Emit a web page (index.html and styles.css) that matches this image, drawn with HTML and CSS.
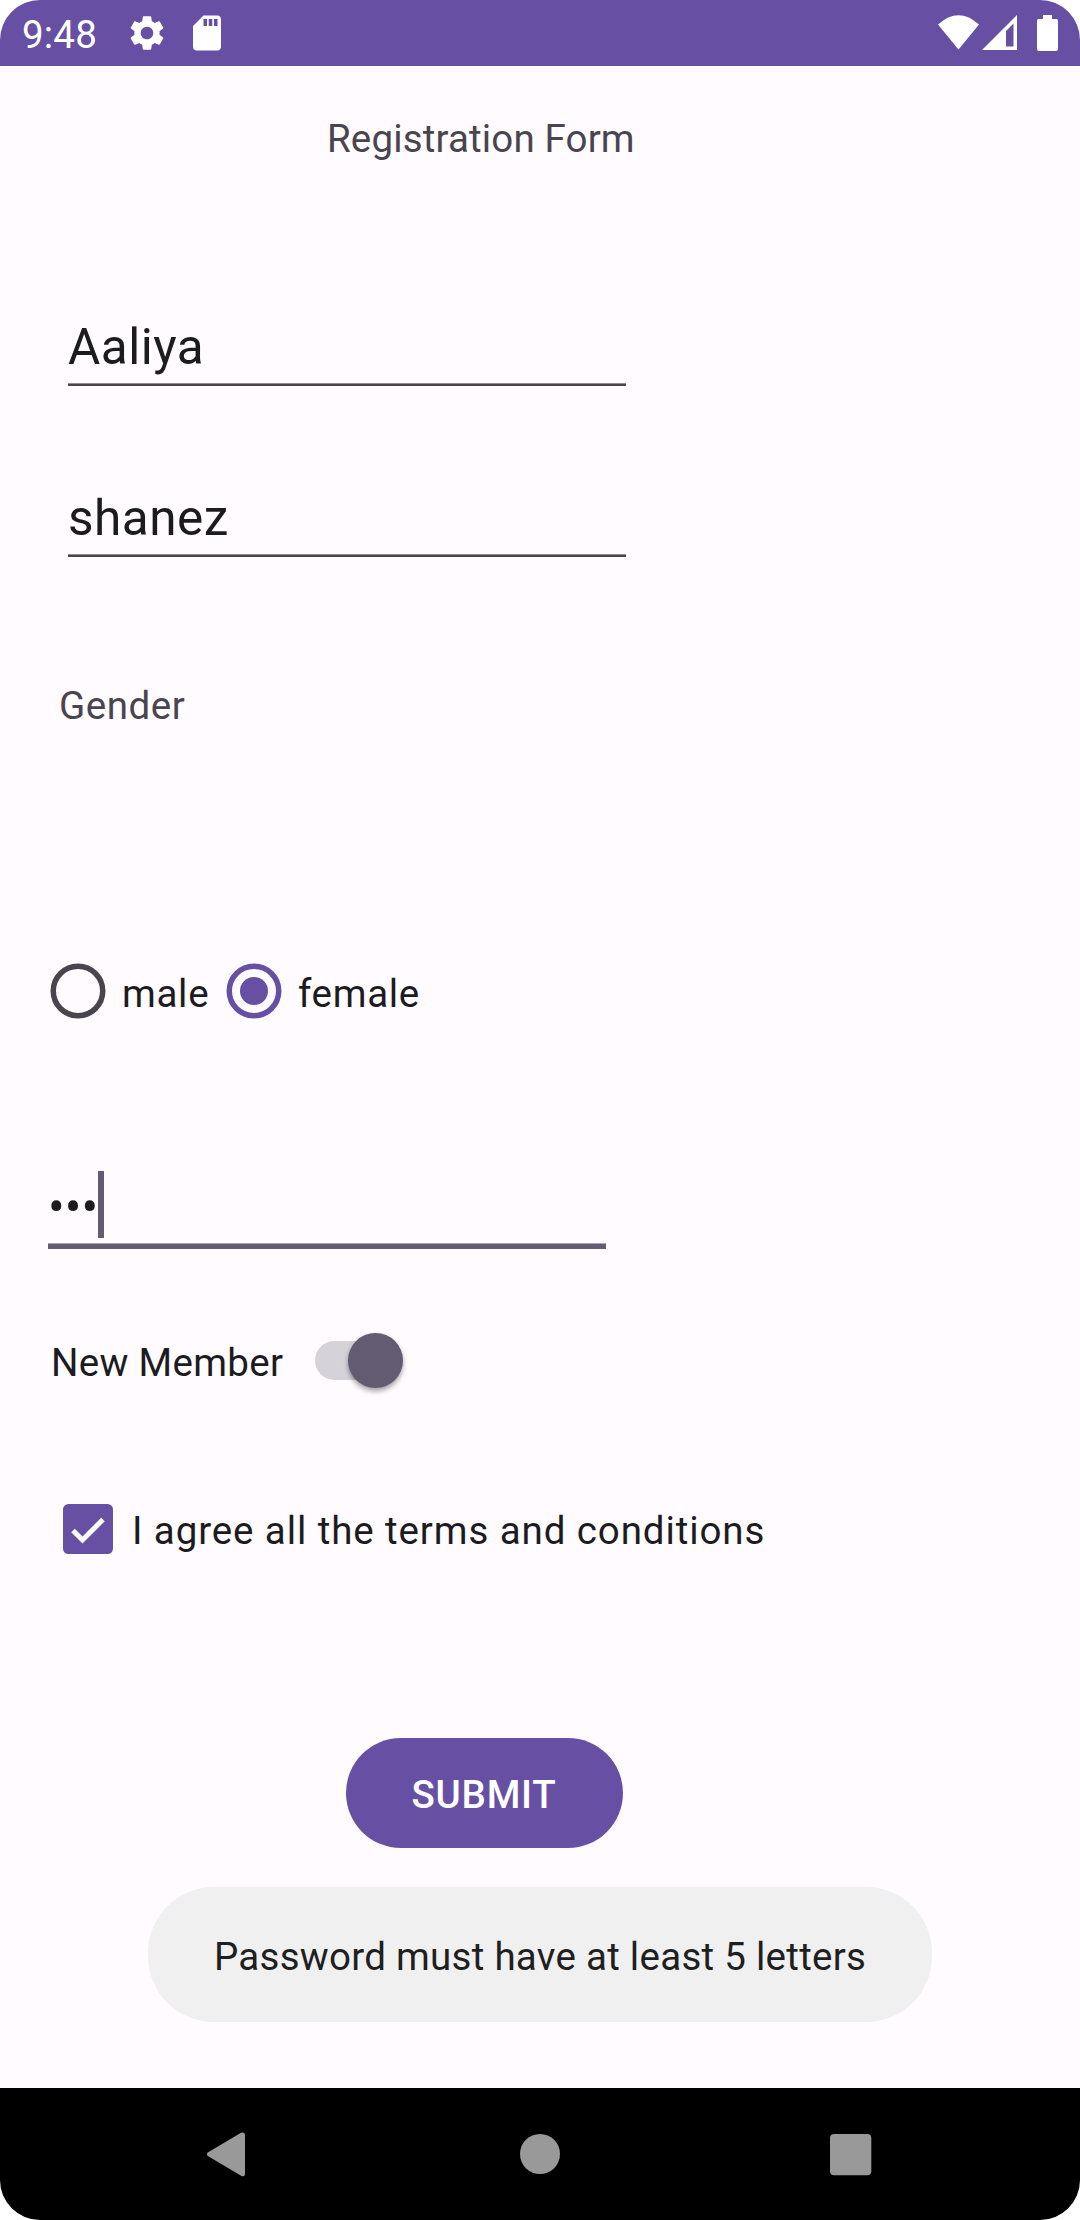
FILE: index.html
```html
<!DOCTYPE html>
<html lang="en">
<head>
<meta charset="utf-8">
<title>Registration Form</title>
<link rel="stylesheet" href="styles.css">
</head>
<body>
<div class="screen">
  <header class="status">
    <span class="clock">9:48</span>
    <svg class="gear" width="42" height="42" viewBox="0 0 24 24" fill="#fff"><path d="M19.14 12.94c.04-.3.06-.61.06-.94 0-.32-.02-.64-.07-.94l2.03-1.58c.18-.14.23-.41.12-.61l-1.92-3.32c-.12-.22-.37-.29-.59-.22l-2.39.96c-.5-.38-1.03-.7-1.62-.94L14.4 2.81c-.04-.24-.24-.41-.48-.41h-3.84c-.24 0-.43.17-.47.41l-.36 2.54c-.59.24-1.13.57-1.62.94l-2.39-.96c-.22-.08-.47 0-.59.22L2.74 8.87c-.12.21-.08.47.12.61l2.03 1.58c-.05.3-.09.63-.09.94s.02.64.07.94l-2.03 1.58c-.18.14-.23.41-.12.61l1.92 3.32c.12.22.37.29.59.22l2.39-.96c.5.38 1.03.7 1.62.94l.36 2.54c.05.24.24.41.48.41h3.84c.24 0 .44-.17.47-.41l.36-2.54c.59-.24 1.13-.56 1.62-.94l2.39.96c.22.08.47 0 .59-.22l1.92-3.32c.12-.22.07-.47-.12-.61l-2.01-1.58zM12 15.6c-1.98 0-3.6-1.62-3.6-3.6s1.62-3.6 3.6-3.6 3.6 1.62 3.6 3.6-1.62 3.6-3.6 3.6z"/></svg>
    <svg class="card" width="42" height="42" viewBox="0 0 24 24" fill="#fff"><path d="M18 2h-8L4 8v12c0 1.100.9 2 2 2h12c1.100 0 2-.9 2-2V4c0-1.100-.9-2-2-2zm-6 6h-2V4h2v4zm3 0h-2V4h2v4zm3 0h-2V4h2v4z"/></svg>
    <svg class="signals" width="122" height="38" viewBox="937 14 122 38" fill="#fff"><path d="M938 24.500Q958.500 6 979 24.500L958.500 49.500z"/><path fill-rule="evenodd" d="M982 50L1017 15V50zM1006 31V46.500H1013.500V23.500z"/><path d="M1043 15h9v4h4.500q1.500 0 1.500 1.500V49q0 2-2 2h-17q-2 0-2-2V20.500q0-1.500 1.500-1.500h4.500z"/></svg>
  </header>

  <main class="form">
    <h1 class="title">Registration Form</h1>
    <div class="field first"><span class="value">Aaliya</span></div>
    <div class="field second"><span class="value">shanez</span></div>
    <div class="gender">Gender</div>

    <div class="radios">
      <svg width="56" height="56" viewBox="0 0 56 56"><circle cx="28" cy="28" r="24.75" fill="none" stroke="#49454f" stroke-width="5.500"/></svg>
      <span class="male">male</span>
      <svg width="56" height="56" viewBox="0 0 56 56"><circle cx="28" cy="28" r="24.75" fill="none" stroke="#6750a3" stroke-width="5.500"/><circle cx="28" cy="28" r="14" fill="#6750a3"/></svg>
      <span class="female">female</span>
    </div>

    <div class="password"><span class="dots">•••</span><span class="caret"></span></div>

    <div class="member">
      <span class="member-label">New Member</span>
      <span class="switch"><span class="thumb"></span></span>
    </div>

    <div class="terms">
      <svg width="50" height="50" viewBox="0 0 50 50"><rect width="50" height="50" rx="5.500" fill="#6750a3"/><path d="M10 26.500L19.500 36L40 15.500" fill="none" stroke="#fff" stroke-width="5"/></svg>
      <span class="terms-label">I agree all the terms and conditions</span>
    </div>

    <button class="submit" type="button">SUBMIT</button>
    <div class="toast">Password must have at least 5 letters</div>
  </main>

  <nav class="nav">
    <svg width="1080" height="132" viewBox="0 0 1080 132" fill="#999"><path d="M243 44.500Q245 44.500 245 47V86Q245 89 241.500 88L207.800 68Q206 66.500 207.800 64.500L241 44.800z"/><circle cx="540" cy="66" r="20"/><rect x="830" y="46" width="41.300" height="41.300" rx="4"/></svg>
  </nav>
</div>
</body>
</html>
```
FILE: styles.css
```css
* { box-sizing: border-box; }
body { margin: 0; background: #fff; font-family: Roboto, sans-serif; }
.screen {
  width: 1080px; height: 2220px; border-radius: 40px; overflow: hidden;
  display: flex; flex-direction: column;
  background: #fffbfe; color: #1c1b1f;
  font-size: 38.5px; line-height: 45px; white-space: nowrap;
}
.status { height: 66px; background: #6750a3; color: #fff; display: flex; padding: 12px 21px 0 22px; }
.clock { width: 103.5px; letter-spacing: 0.2px; }
.card { margin-left: 18.8px; }
.signals { margin: 2px 0 0 auto; }
.form { flex: 1; display: flex; flex-direction: column; align-items: flex-start; }
.title { margin: 50px 0 0 327px; font: inherit; color: #49454f; letter-spacing: 0.15px; }
.field {
  width: 558px; height: 68px; margin-left: 68px;
  font-size: 49.5px; line-height: 58px; letter-spacing: 0.5px;
  background: linear-gradient(#918e95 1px, #49454f 1px) bottom / 100% 3px no-repeat;
}
.first { margin-top: 157px; }
.second { margin-top: 103px; }
.gender { margin: 126px 0 0 59px; color: #49454f; letter-spacing: 0.55px; }
.radios { display: flex; height: 56px; margin: 235px 0 0 50px; letter-spacing: 0.69px; }
.male { width: 104px; margin: 8px 0 0 16px; }
.female { margin: 8px 0 0 16px; }
.password {
  display: flex; width: 558px; height: 78px; margin: 152px 0 0 48px;
  font-size: 49.5px; line-height: 58px;
  background: linear-gradient(#a7a2ae 1px, #625b71 1px) bottom / 100% 6px no-repeat;
}
.dots { width: 50px; padding-top: 7px; }
.caret { width: 6px; height: 67px; background: #625b71; }
.member { display: flex; height: 56px; margin: 84px 0 0 51px; letter-spacing: 0.3px; }
.member-label { width: 264px; padding-top: 7px; }
.switch {
  display: flex; justify-content: flex-end;
  width: 88px; height: 39px; margin-top: 8px; border-radius: 20px;
  background: linear-gradient(90deg, #d5d2d9 82px, transparent 82px);
}
.thumb {
  width: 55px; height: 55px; margin-top: -8px; border-radius: 50%; background: #625b71;
  box-shadow: 0 4px 5px rgba(0,0,0,.25), 0 1px 4px rgba(0,0,0,.15);
}
.terms { display: flex; height: 50px; margin: 115px 0 0 63px; }
.terms-label { margin: 4px 0 0 19px; letter-spacing: 0.9px; }
.submit {
  width: 277px; height: 110px; margin: 184px 0 0 346px; padding: 2px 1px 0 0; border: 0; border-radius: 55px;
  background: #6750a3; color: #fff; font: 500 38.5px/45px Roboto, sans-serif; letter-spacing: 0.8px;
}
.toast {
  width: 784px; height: 135px; margin: 39px 0 0 148px; padding: 47px 66px 0;
  border-radius: 66px; background: #f0f0f0; color: #1f1f1f; letter-spacing: 0.27px;
}
.nav { height: 132px; background: #000; }
.nav svg { display: block; }
```
